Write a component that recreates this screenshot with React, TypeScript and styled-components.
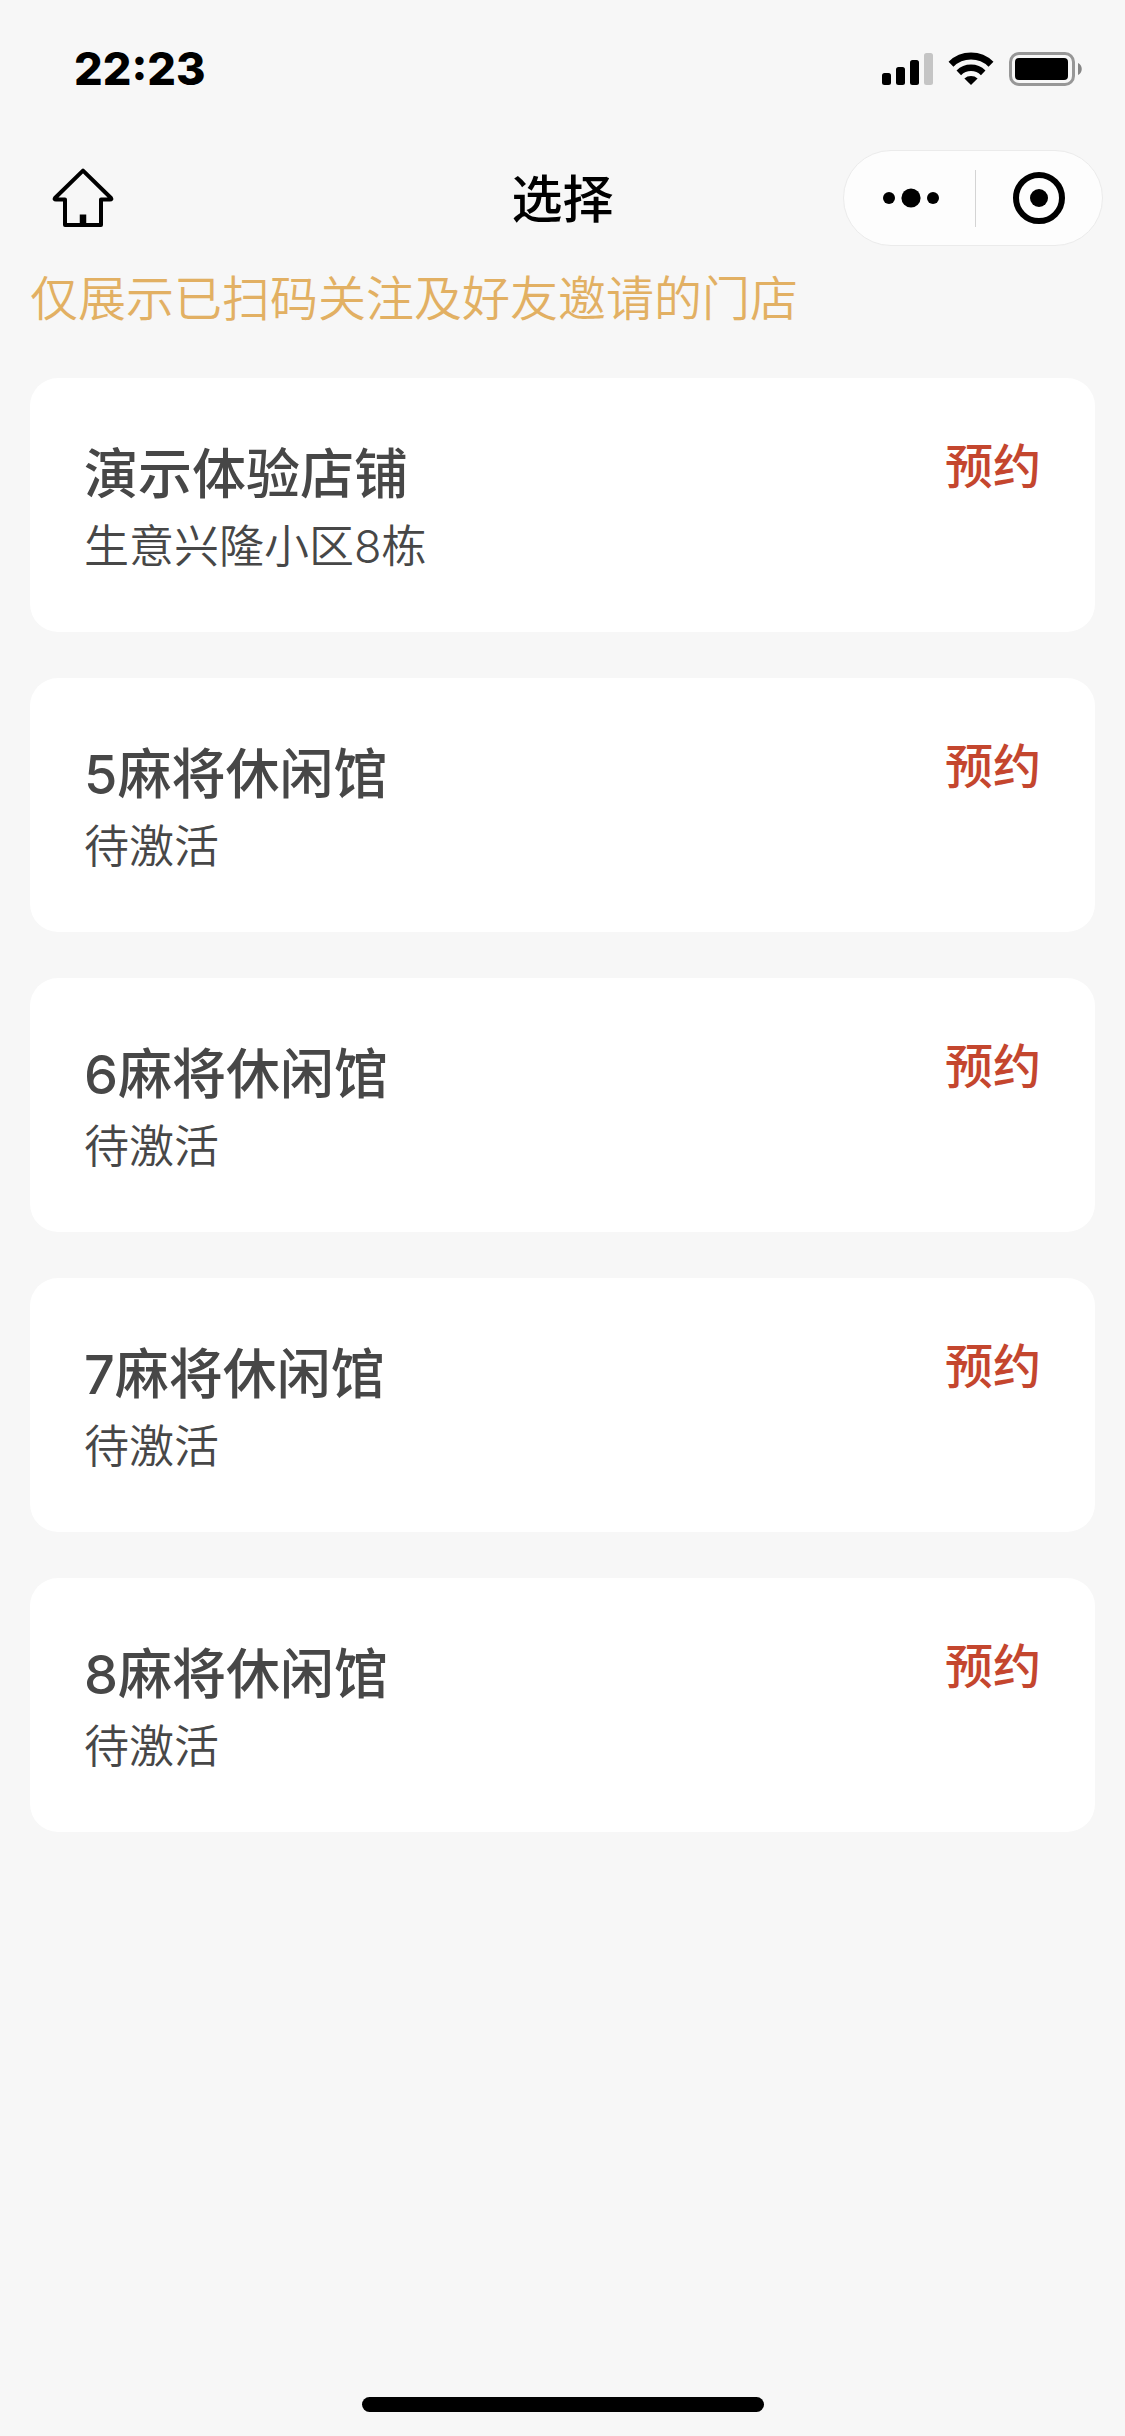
import React from "react";
import styled, { createGlobalStyle } from "styled-components";

const GlobalStyle = createGlobalStyle`
  *, *::before, *::after {
    box-sizing: border-box;
  }
  body {
    margin: 0;
    background: #f7f7f7;
    color: #474747;
    font-family: Inter, "Noto Sans CJK SC", sans-serif;
  }
`;

const Page = styled.div`
  display: flex;
  flex-direction: column;
  min-height: 100vh;
`;

const StatusBar = styled.div`
  display: flex;
  align-items: center;
  justify-content: space-between;
  height: 138px;
  padding: 0 42px 0 74px;
`;

const Clock = styled.time`
  color: #000;
  font-size: 45px;
  font-weight: 800;
  line-height: 56px;
`;

const StatusIcons = styled.div`
  display: flex;
  align-items: center;
  gap: 15px;

  svg {
    display: block;
  }
`;

const NavBar = styled.header`
  display: grid;
  grid-template-columns: 1fr auto 1fr;
  align-items: center;
  height: 120px;
  padding: 0 22px;
`;

const IconButton = styled.button`
  display: flex;
  align-items: center;
  justify-content: center;
  padding: 0;
  border: 0;
  background: none;
  color: #000;
  cursor: pointer;
`;

const HomeButton = styled(IconButton)`
  justify-self: start;
  width: 72px;
  height: 72px;
  margin-left: 25px;
`;

const PageTitle = styled.h1`
  margin: 0;
  padding-top: 4px;
  color: #000;
  font-size: 51px;
  font-weight: 500;
  line-height: 64px;
`;

const Capsule = styled.div`
  display: flex;
  align-items: center;
  justify-self: end;
  width: 260px;
  height: 96px;
  padding-left: 4px;
  border: 1px solid #ebebeb;
  border-radius: 48px;
  background: #fdfdfd;
`;

const CapsuleButton = styled(IconButton)`
  flex: 1;
  height: 100%;
`;

const CapsuleDivider = styled.span`
  width: 1px;
  height: 57px;
  background: #d4d4d4;
`;

const Notice = styled.p`
  margin: 0;
  padding: 9px 30px 47px;
  color: #e2b063;
  font-size: 48px;
  font-weight: 350;
  line-height: 64px;
`;

const StoreList = styled.ul`
  display: flex;
  flex-direction: column;
  gap: 46px;
  margin: 0;
  padding: 0 30px;
  list-style: none;
`;

const StoreCard = styled.li`
  display: flex;
  align-items: flex-start;
  justify-content: space-between;
  padding: 57px 54px 53px;
  border-radius: 28px;
  background: #fff;
`;

const StoreName = styled.h2`
  margin: 0;
  font-size: 54px;
  font-weight: 500;
  line-height: 80px;
`;

const StoreAddress = styled.p`
  margin: 0;
  font-size: 45px;
  font-weight: 350;
  line-height: 64px;
`;

const BookButton = styled.button`
  padding: 0;
  border: 0;
  background: none;
  color: #c4462e;
  font-family: inherit;
  font-size: 48px;
  font-weight: 500;
  line-height: 64px;
  cursor: pointer;
`;

const HomeIndicator = styled.div`
  width: 402px;
  height: 15px;
  margin: auto auto 24px;
  border-radius: 8px;
  background: #000;
`;

const SignalIcon = () => (
  <svg width="51" height="34" viewBox="0 0 51 34" aria-hidden="true">
    <rect x="0" y="21" width="9" height="12" rx="2.5" />
    <rect x="14" y="15" width="9" height="18" rx="2.5" />
    <rect x="28" y="8" width="9" height="25" rx="2.5" />
    <rect x="42" y="1" width="9" height="32" rx="2.5" fill="#c5c5c5" />
  </svg>
);

const WifiIcon = () => (
  <svg width="46" height="34" viewBox="0 0 46 34" aria-hidden="true">
    <g fill="none" stroke="#000" strokeWidth="7">
      <path d="M3 12.3A28.5 28.5 0 0 1 43 12.3" />
      <path d="M10.8 20.8A17.5 17.5 0 0 1 35.2 20.8" strokeWidth="6.5" />
    </g>
    <path d="M16.4 26.4A10 10 0 0 1 29.6 26.4L23 33Z" />
  </svg>
);

const BatteryIcon = () => (
  <svg width="74" height="34" viewBox="0 0 74 34" aria-hidden="true">
    <rect x="1.5" y="1.5" width="63" height="31" rx="8.5" fill="none" stroke="#979797" strokeWidth="3" />
    <rect x="6" y="6" width="53" height="22" rx="4" />
    <path d="M69 11C74 13 74 21 69 23Z" fill="#868686" />
  </svg>
);

const HomeIcon = () => (
  <svg width="62" height="60" viewBox="0 0 62 60" fill="none" stroke="#000" strokeWidth="4" strokeLinejoin="round" aria-hidden="true">
    <path d="M31 2.6L59 30Q60 31.6 58 31.6H49V57H13V31.6H4Q2 31.6 3 30Z" />
    <path d="M31 46.5V57" strokeWidth="6.5" />
  </svg>
);

const MoreIcon = () => (
  <svg width="56" height="20" viewBox="0 0 56 20" aria-hidden="true">
    <circle cx="6" cy="10" r="6" />
    <circle cx="28" cy="10" r="9.6" />
    <circle cx="50" cy="10" r="6" />
  </svg>
);

const CloseIcon = () => (
  <svg width="52" height="52" viewBox="0 0 52 52" aria-hidden="true">
    <circle cx="26" cy="26" r="23" fill="none" stroke="#000" strokeWidth="6" />
    <circle cx="26" cy="26" r="9" />
  </svg>
);

const stores = [
  { name: "演示体验店铺", address: "生意兴隆小区8栋" },
  { name: "5麻将休闲馆", address: "待激活" },
  { name: "6麻将休闲馆", address: "待激活" },
  { name: "7麻将休闲馆", address: "待激活" },
  { name: "8麻将休闲馆", address: "待激活" },
];

export default function App() {
  return (
    <Page lang="zh-CN">
      <GlobalStyle />
      <StatusBar>
        <Clock>22:23</Clock>
        <StatusIcons>
          <SignalIcon />
          <WifiIcon />
          <BatteryIcon />
        </StatusIcons>
      </StatusBar>
      <NavBar>
        <HomeButton type="button" aria-label="首页">
          <HomeIcon />
        </HomeButton>
        <PageTitle>选择</PageTitle>
        <Capsule>
          <CapsuleButton type="button" aria-label="更多">
            <MoreIcon />
          </CapsuleButton>
          <CapsuleDivider />
          <CapsuleButton type="button" aria-label="关闭">
            <CloseIcon />
          </CapsuleButton>
        </Capsule>
      </NavBar>
      <main>
        <Notice>仅展示已扫码关注及好友邀请的门店</Notice>
        <StoreList>
          {stores.map((store) => (
            <StoreCard key={store.name}>
              <div>
                <StoreName>{store.name}</StoreName>
                <StoreAddress>{store.address}</StoreAddress>
              </div>
              <BookButton type="button">预约</BookButton>
            </StoreCard>
          ))}
        </StoreList>
      </main>
      <HomeIndicator />
    </Page>
  );
}
